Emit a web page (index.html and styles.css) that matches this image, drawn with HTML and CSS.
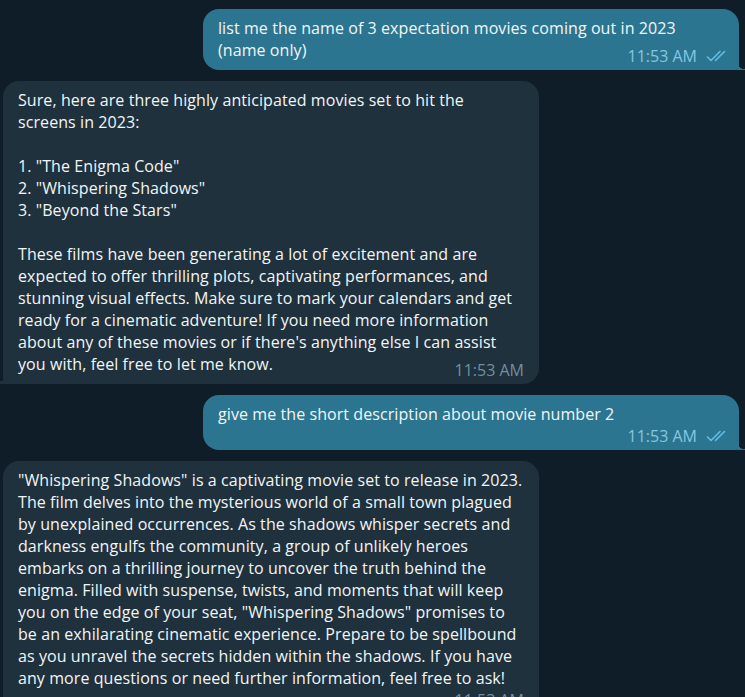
FILE: index.html
```html
<!DOCTYPE html>
<html lang="en">
<head>
<meta charset="utf-8">
<title>Chat</title>
<link rel="stylesheet" href="styles.css">
</head>
<body>
<div class="chat">
  <div class="msg out">
    <div class="text">list me the name of 3 expectation movies coming out in 2023<br>(name only)</div>
    <div class="meta overlap">
      <span class="time">11:53 AM</span>
      <svg class="ticks" width="22" height="12" viewBox="0 0 22 12"><path d="M1.5 7 L5 10.5 L14 1.5 M9.5 10.5 L18.5 1.5" fill="none" stroke="currentColor" stroke-width="1.6" stroke-linecap="round" stroke-linejoin="round"/></svg>
    </div>
  </div>

  <div class="msg in">
    <div class="text">Sure, here are three highly anticipated movies set to hit the<br>screens in 2023:<br><br>1. "The Enigma Code"<br>2. "Whispering Shadows"<br>3. "Beyond the Stars"<br><br>These films have been generating a lot of excitement and are<br>expected to offer thrilling plots, captivating performances, and<br>stunning visual effects. Make sure to mark your calendars and get<br>ready for a cinematic adventure! If you need more information<br>about any of these movies or if there's anything else I can assist<br>you with, feel free to let me know.</div>
    <div class="meta overlap">
      <span class="time">11:53 AM</span>
    </div>
  </div>

  <div class="msg out">
    <div class="text">give me the short description about movie number 2</div>
    <div class="meta newline">
      <span class="time">11:53 AM</span>
      <svg class="ticks" width="22" height="12" viewBox="0 0 22 12"><path d="M1.5 7 L5 10.5 L14 1.5 M9.5 10.5 L18.5 1.5" fill="none" stroke="currentColor" stroke-width="1.6" stroke-linecap="round" stroke-linejoin="round"/></svg>
    </div>
  </div>

  <div class="msg in">
    <div class="text">"Whispering Shadows" is a captivating movie set to release in 2023.<br>The film delves into the mysterious world of a small town plagued<br>by unexplained occurrences. As the shadows whisper secrets and<br>darkness engulfs the community, a group of unlikely heroes<br>embarks on a thrilling journey to uncover the truth behind the<br>enigma. Filled with suspense, twists, and moments that will keep<br>you on the edge of your seat, "Whispering Shadows" promises to<br>be an exhilarating cinematic experience. Prepare to be spellbound<br>as you unravel the secrets hidden within the shadows. If you have<br>any more questions or need further information, feel free to ask!</div>
    <div class="meta newline">
      <span class="time">11:53 AM</span>
    </div>
  </div>
</div>
</body>
</html>
```

FILE: styles.css
```css
html, body {
  margin: 0;
  padding: 0;
  background: #0e1d27;
  height: 100%;
  overflow: hidden;
}

body {
  font-family: "Open Sans", "Noto Sans", sans-serif;
  color: #f3f5f7;
}

.chat {
  display: flex;
  flex-direction: column;
  gap: 11px;
  padding: 9px 6px 0 3px;
}

.msg {
  position: relative;
  width: 536px;
  box-sizing: border-box;
  border-radius: 16px;
  padding: 8px 11px 5px 15px;
  display: flex;
  flex-direction: column;
}

.msg.out {
  align-self: flex-end;
  background: #2b7590;
  border-bottom-right-radius: 4px;
}

.msg.in {
  align-self: flex-start;
  background: #1e313d;
  border-bottom-left-radius: 4px;
  padding-right: 15px;
}

.msg.out::after {
  content: "";
  position: absolute;
  right: -6px;
  bottom: 0;
  width: 8px;
  height: 9px;
  background: radial-gradient(circle at 100% 0, transparent 8px, #2b7590 8.5px);
}

.msg.in::after {
  content: "";
  position: absolute;
  left: -3px;
  bottom: 0;
  width: 6px;
  height: 9px;
  background: radial-gradient(circle at 0 0, transparent 6px, #1e313d 6.5px);
}

.text {
  font-size: 16px;
  letter-spacing: 0.08px;
  line-height: 22px;
  white-space: nowrap;
}

.meta {
  display: flex;
  justify-content: flex-end;
  align-items: center;
  gap: 9px;
  height: 18px;
}

.meta.overlap {
  margin-top: -14px;
}

.meta.newline {
  margin-top: 2px;
}

.time {
  font-size: 16px;
  line-height: 18px;
}

.out .time {
  color: #86c6e2;
}

.in .time {
  color: #71909f;
}

.ticks {
  color: #62bde5;
  display: block;
}
```
